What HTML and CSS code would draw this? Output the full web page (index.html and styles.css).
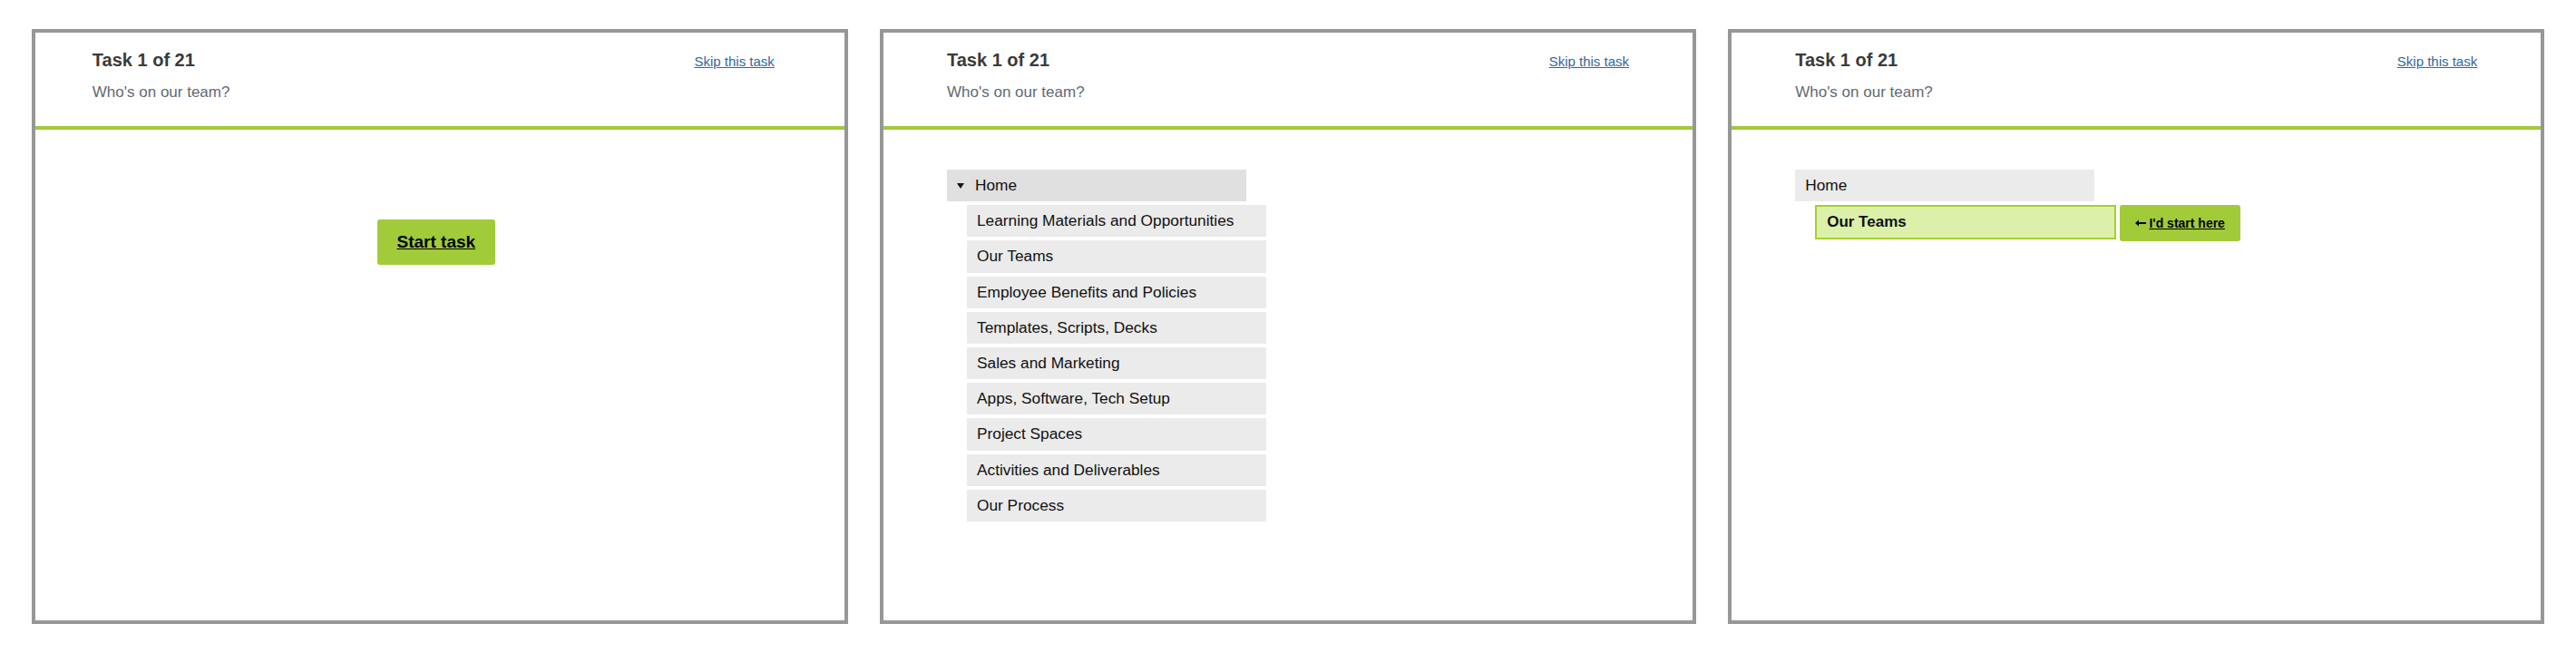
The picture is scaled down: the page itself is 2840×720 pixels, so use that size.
FILE: index.html
```html
<!DOCTYPE html>
<html lang="en">
<head>
    <meta charset="UTF-8">
    <meta name="viewport" content="width=device-width, initial-scale=1.0">
    <title>Tree test</title>
    <link rel="stylesheet" href="styles.css">
</head>
<body>
    <div class="board">
        <!-- Step 1: intro -->
        <section class="panel panel-scroll">
            <header class="task-head">
                <div class="task-inner">
                    <div class="task-row">
                        <h2 class="task-title">Task 1 of 21</h2>
                        <a class="skip-link" href="#">Skip this task</a>
                    </div>
                    <p class="task-question">Who's on our team?</p>
                </div>
            </header>
            <div class="task-body body-start">
                <div class="task-inner start-wrap">
                    <button class="start-btn" type="button">Start task</button>
                </div>
            </div>
        </section>

        <!-- Step 2: browsing the tree -->
        <section class="panel">
            <header class="task-head">
                <div class="task-inner">
                    <div class="task-row">
                        <h2 class="task-title">Task 1 of 21</h2>
                        <a class="skip-link" href="#">Skip this task</a>
                    </div>
                    <p class="task-question">Who's on our team?</p>
                </div>
            </header>
            <div class="task-body">
                <div class="task-inner">
                    <ul class="tree">
                        <li>
                            <div class="node node-open"><span class="caret"></span>Home</div>
                            <ul class="tree-children">
                                <li><div class="node">Learning Materials and Opportunities</div></li>
                                <li><div class="node">Our Teams</div></li>
                                <li><div class="node">Employee Benefits and Policies</div></li>
                                <li><div class="node">Templates, Scripts, Decks</div></li>
                                <li><div class="node">Sales and Marketing</div></li>
                                <li><div class="node">Apps, Software, Tech Setup</div></li>
                                <li><div class="node">Project Spaces</div></li>
                                <li><div class="node">Activities and Deliverables</div></li>
                                <li><div class="node">Our Process</div></li>
                            </ul>
                        </li>
                    </ul>
                </div>
            </div>
        </section>

        <!-- Step 3: answer picked -->
        <section class="panel">
            <header class="task-head">
                <div class="task-inner">
                    <div class="task-row">
                        <h2 class="task-title">Task 1 of 21</h2>
                        <a class="skip-link" href="#">Skip this task</a>
                    </div>
                    <p class="task-question">Who's on our team?</p>
                </div>
            </header>
            <div class="task-body">
                <div class="task-inner">
                    <ul class="tree">
                        <li>
                            <div class="node">Home</div>
                            <ul class="tree-children">
                                <li class="picked-row">
                                    <div class="node node-picked">Our Teams</div>
                                    <button class="answer-btn" type="button">
                                        <svg class="answer-arrow" width="12" height="8" viewBox="0 0 12 8"><path d="M0 4 L4 0.5 V3 H12 V5 H4 V7.5 Z" fill="#000"/></svg>
                                        <span>I'd start here</span>
                                    </button>
                                </li>
                            </ul>
                        </li>
                    </ul>
                </div>
            </div>
        </section>
    </div>
</body>
</html>
```

FILE: styles.css
```css
body {
    margin: 0;
    padding: 0;
    background-color: #ffffff;
    font-family: "Liberation Sans", Arial, sans-serif;
    color: #111111;
}

.board {
    display: flex;
    gap: 35.5px;
    padding: 32px 35px;
}

.panel {
    width: 900px;
    height: 656px;
    box-sizing: border-box;
    border: 4px solid #979797;
    background-color: #ffffff;
}

.task-inner {
    max-width: 752px;
    margin: 0 auto;
}

/* first panel still has its scroll gutter, so content sits a bit left */
.panel-scroll .task-head,
.panel-scroll .task-body {
    padding-right: 14px;
}

.task-head {
    height: 107px;
    box-sizing: border-box;
    padding-top: 18px;
    border-bottom: 4px solid #a1cb39;
}

.task-row {
    display: flex;
    justify-content: space-between;
    align-items: baseline;
}

.task-title {
    margin: 0;
    font-size: 20px;
    line-height: 24px;
    font-weight: bold;
    color: #3a3a3a;
}

.skip-link {
    font-size: 15px;
    color: #2d69a3;
    text-decoration: underline;
}

.task-question {
    margin: 14px 0 0;
    font-size: 17px;
    line-height: 20px;
    color: #5f6a73;
}

.task-body {
    padding-top: 44px;
}

.body-start {
    padding-top: 99px;
}

.start-wrap {
    display: flex;
    justify-content: center;
    padding-left: 6px;
}

.start-btn {
    width: 130px;
    height: 50px;
    border: none;
    border-radius: 3px;
    background-color: #a1cb39;
    color: #000000;
    font-family: inherit;
    font-size: 19px;
    font-weight: bold;
    text-decoration: underline;
    cursor: pointer;
}

.tree,
.tree-children {
    list-style: none;
    margin: 0;
    padding: 0;
}

.tree-children {
    margin-left: 22px;
    margin-top: 4px;
}

.node {
    width: 330px;
    height: 35.2px;
    box-sizing: border-box;
    padding: 0 11px;
    margin-bottom: 4px;
    line-height: 35px;
    font-size: 17.3px;
    background-color: #ebebeb;
    color: #111111;
    white-space: nowrap;
}

.tree > li > .node {
    margin-bottom: 0;
}

.node-open {
    display: flex;
    align-items: center;
    padding-left: 11px;
    background-color: #e0e0e0;
}

.caret {
    width: 0;
    height: 0;
    border-left: 4.5px solid transparent;
    border-right: 4.5px solid transparent;
    border-top: 6px solid #111111;
    margin-right: 12px;
}

.picked-row {
    display: flex;
    align-items: flex-start;
    gap: 4px;
}

.node-picked {
    width: 332px;
    height: 38px;
    line-height: 34px;
    border: 2px solid #a4d02f;
    background-color: #dcf0aa;
    font-size: 17px;
    font-weight: bold;
    margin-bottom: 0;
}

.answer-btn {
    display: flex;
    align-items: center;
    justify-content: center;
    gap: 3px;
    width: 133px;
    height: 40px;
    border: none;
    border-radius: 3px;
    background-color: #a1cb39;
    color: #000000;
    font-family: inherit;
    font-size: 14px;
    font-weight: bold;
    cursor: pointer;
}

.answer-btn span {
    text-decoration: underline;
}
```
